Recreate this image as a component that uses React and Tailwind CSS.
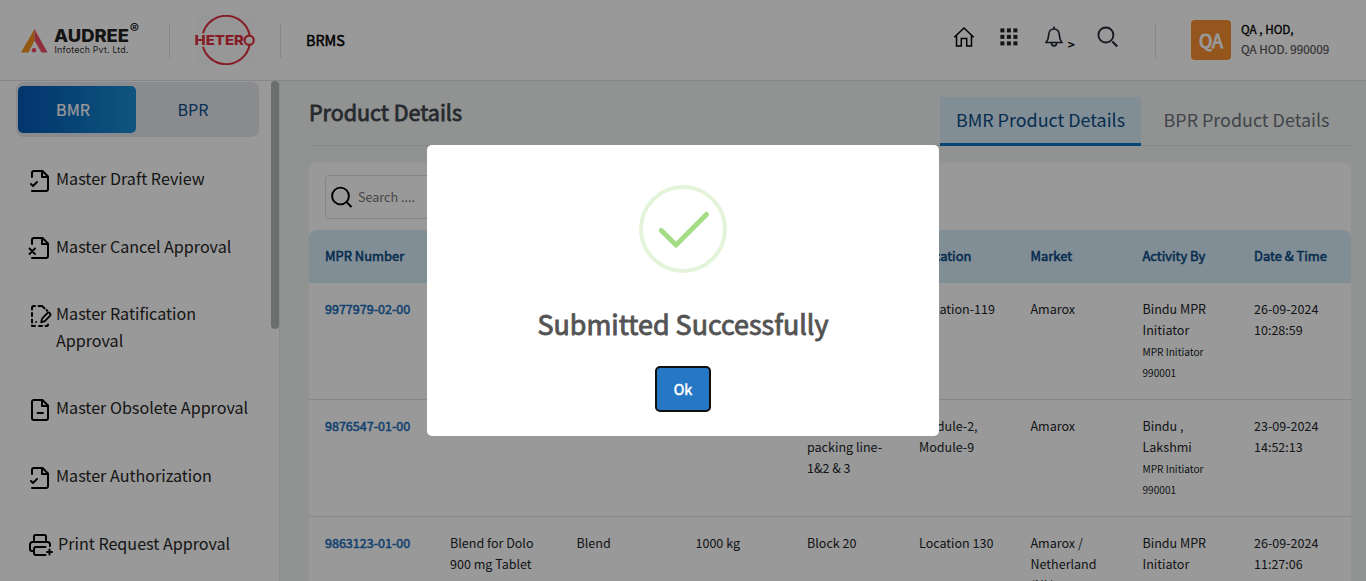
import React from 'react';

const stroke = {
  fill: 'none',
  stroke: 'currentColor',
  strokeWidth: 2,
  strokeLinecap: 'round',
  strokeLinejoin: 'round',
};

function FileIcon({ kind }) {
  return (
    <svg width="24" height="24" viewBox="0 0 24 24" className="block shrink-0 overflow-visible text-black" {...stroke}>
      {(kind === 'check' || kind === 'cross') && (
        <>
          <path d="M4 22h14a2 2 0 0 0 2-2V7.500L14.500 2H6a2 2 0 0 0-2 2v4" />
          <path d="M14 2v6h6" />
        </>
      )}
      {kind === 'check' && <path d="m3 15 2 2 4-4" />}
      {kind === 'cross' && <path d="m1.500 12.500 5.500 5.500M7 12.500 1.500 18" strokeWidth="1.800" />}
      {kind === 'minus' && (
        <>
          <path d="M14.500 2H6a2 2 0 0 0-2 2v16a2 2 0 0 0 2 2h12a2 2 0 0 0 2-2V7.500L14.500 2z" />
          <path d="M14 2v6h6M9.500 15h5.500" />
        </>
      )}
      {kind === 'pen' && (
        <>
          <path d="M4 5.500V4a2 2 0 0 1 2-2h1M10.500 2h3.500l2.500 2.300M18.500 6l.7.7M4 9v3M4 15.500v3M4 21.500v.5h3M11 22h3M17.500 22h1a1.500 1.500 0 0 0 1.500-1.500" />
          <path d="M8 18h.1M13.200 18.300l.9-3.700 5-5.300a1.900 1.900 0 0 1 2.800 2.600l-5 5.300-3.700 1.100z" strokeWidth="1.800" />
        </>
      )}
      {kind === 'printer' && (
        <>
          <path d="M6 8V3.500A1.500 1.500 0 0 1 7.500 2h9A1.500 1.500 0 0 1 18 3.500V8" />
          <path d="M6 18H4a2 2 0 0 1-2-2v-4.500A2.500 2.500 0 0 1 4.500 9h15a2.500 2.500 0 0 1 2.500 2.500V13" />
          <path d="M17.500 14H8a2 2 0 0 0-2 2v4a2 2 0 0 0 2 2h9.500M21.500 16.500v5M19 19h5" />
        </>
      )}
    </svg>
  );
}

const menu = [
  { label: 'Master Draft Review', icon: 'check' },
  { label: 'Master Cancel Approval', icon: 'cross' },
  { label: 'Master Ratification Approval', icon: 'pen' },
  { label: 'Master Obsolete Approval', icon: 'minus' },
  { label: 'Master Authorization', icon: 'check' },
  { label: 'Print Request Approval', icon: 'printer' },
];

const columns = ['MPR Number', 'Product Name', 'Stage', 'Batch Size', 'Block', 'Location', 'Market', 'Activity By', 'Date & Time'];

const rows = [
  ['9977979-02-00', '', '', '', '', 'Location-119', 'Amarox', 'Bindu MPR Initiator', '26-09-2024 10:28:59'],
  ['9876547-01-00', '', '', '', 'Block\npacking line-\n1&2 & 3', 'Module-2, Module-9', 'Amarox', 'Bindu ,\nLakshmi', '23-09-2024 14:52:13'],
  ['9863123-01-00', 'Blend for Dolo 900 mg Tablet', 'Blend', '1000 kg', 'Block 20', 'Location 130', 'Amarox /\nNetherland\n(NL)', 'Bindu MPR Initiator', '26-09-2024 11:27:06'],
];

const grid = 'grid grid-cols-[125px_126.5px_119px_111.500px_112px_111.500px_112px_111.500px_113px]';

function Header() {
  return (
    <header className="flex h-[81px] shrink-0 items-center border-b border-[#dfe1ec] bg-white">
      <svg width="120" height="34" viewBox="0 0 120 34" className="ml-5 shrink-0">
        <path d="M1 29.500 14.500 6 14.500 17.500 8.500 29.500z" fill="#f7931e" />
        <path d="M14.500 6 27.500 29.500H21.500L14.500 17.500z" fill="#ee4d64" />
        <circle cx="14" cy="27.200" r="2.300" fill="#ee4d64" />
        <text x="34" y="19" textLength="75" lengthAdjust="spacingAndGlyphs" fontFamily="Inter" fontWeight="800" fontSize="17" fill="#222">AUDREE</text>
        <text x="34.500" y="29.500" textLength="74" fontFamily="Inter" fontSize="8.800" fill="#333">Infotech Pvt. Ltd.</text>
        <text x="109.800" y="11.200" fontFamily="Inter" fontWeight="600" fontSize="14" fill="#222">®</text>
      </svg>
      <div className="ml-[29px] h-[35px] w-px bg-[#dfe1e6]" />
      <svg width="60" height="50" viewBox="0 0 60 50" className="ml-[25px] shrink-0 bg-[#fcfcfc]">
        <path d="M8 18.200A24 24 0 0 1 54.600 20M54.600 30A24 24 0 0 1 8 31.800" fill="none" stroke="#e0303e" strokeWidth="2" />
        <text x="-0.500" y="30.300" textLength="49.500" lengthAdjust="spacingAndGlyphs" fontFamily="Inter" fontWeight="800" fontSize="13.500" fill="#e0303e">HETER</text>
        <circle cx="54.200" cy="25.300" r="4.600" fill="none" stroke="#e0303e" strokeWidth="2.200" />
      </svg>
      <div className="ml-[25px] h-[35px] w-px bg-[#dfe1e6]" />
      <div className="ml-[25px] text-[14.400px] leading-6 text-black [-webkit-text-stroke:0.500px]">BRMS</div>

      <div className="ml-auto flex items-center">
        <svg width="22" height="22" viewBox="0 0 22 22" className="-mt-[7px] text-black" fill="none" stroke="currentColor" strokeWidth="1.500">
          <path d="M1.300 11.300 11 2l9.700 9.300M3.500 9.800V20h4.800v-7.500h5.400V20h4.800V9.800" />
        </svg>
        <svg width="18" height="18" viewBox="0 0 18 18" className="-mt-[7px] ml-[25px]" fill="#222">
          {[0, 6.5, 13].map((y) => [0, 6.5, 13].map((x) => <rect key={`${x}-${y}`} x={x + 0.4} y={y + 0.4} width="4" height="4" />))}
        </svg>
        <svg width="18" height="22" viewBox="0 0 18 22" className="-mt-[6px] ml-[27px] text-[#1f2933]" fill="none" stroke="currentColor" strokeWidth="1.700">
          <path d="M9 3C5.500 3 3.700 5.700 3.700 8.800c0 4.200-1 5.700-2.600 7.700h15.800c-1.600-2-2.600-3.500-2.600-7.700C14.300 5.700 12.500 3 9 3zM9 3V.5M6.500 17.300a2.500 2.500 0 0 0 5 0" />
        </svg>
        <span className="ml-[5px] mt-[8px] w-[8px] text-[12px] leading-4 text-black [-webkit-text-stroke:0.400px]">&gt;</span>
        <svg width="22" height="22" viewBox="0 0 22 22" className="-mt-[7px] ml-[21px] text-[#252b35]" fill="none" stroke="currentColor">
          <circle cx="8.900" cy="9" r="7.500" strokeWidth="1.900" />
          <path d="m15.300 15.500 5 5" strokeWidth="2.200" />
        </svg>
        <div className="ml-[36px] h-[35px] w-px bg-[#dfe1e6]" />
        <div className="ml-[35px] flex size-10 items-center justify-center rounded bg-[#f98f31] text-[18px] leading-6 text-white [-webkit-text-stroke:0.900px]">QA</div>
        <div className="-mt-[3px] ml-[10px] w-[125px] whitespace-nowrap text-[11.700px] leading-5">
          <div className="text-black [-webkit-text-stroke:0.300px]">QA , HOD,</div>
          <div className="text-[#555] [-webkit-text-stroke:0.200px]">QA HOD. 990009</div>
        </div>
      </div>
    </header>
  );
}

function Sidebar() {
  return (
    <aside className="flex w-[280px] shrink-0 justify-between overflow-hidden border-r border-[#e4e6e8] bg-white">
      <div className="ml-4 w-[243px]">
        <div className="mt-px flex h-[55px] rounded-lg bg-[#e5e8ef] px-[2px] py-1 text-[16.100px]">
          <div className="flex w-[118px] items-center justify-center rounded-[5px] bg-linear-to-r from-[#0559b5] to-[#1a8dd4] pr-2 text-white [-webkit-text-stroke:0.200px]">BMR</div>
          <div className="flex w-[114px] items-center justify-center text-[#0b4f8c]">BPR</div>
        </div>
        <nav className="mt-[28px] flex flex-col gap-[40.750px]">
          {menu.map((m) => (
            <div key={m.label} className="flex items-start pl-3 text-[16.130px] leading-[26.800px] text-[#262626]">
              <div className="-mb-1 mt-[3.800px]"><FileIcon kind={m.icon} /></div>
              <span className={m.icon === 'printer' ? 'ml-[6px]' : 'ml-[4px] max-w-[200px]'}>{m.label}</span>
            </div>
          ))}
        </nav>
      </div>
      <div className="h-[248px] w-2 rounded-full bg-[#b4b7b7]" />
    </aside>
  );
}

function Table() {
  return (
    <div className="mt-[17px] w-[1042px] rounded-lg bg-white">
      <div className="px-4 pt-3">
        <div className="flex h-11 w-[280px] items-center rounded border border-[#dcdcdc] pl-[5px]">
          <svg width="22" height="22" viewBox="0 0 22 22" className="text-black" fill="none" stroke="currentColor" strokeWidth="1.900">
            <circle cx="9.500" cy="10" r="8.400" />
            <path d="m15.500 16 5 5" />
          </svg>
          <span className="ml-[5px] text-[12.600px] leading-5 text-[#757575]">Search ....</span>
        </div>
      </div>
      <div className={`${grid} mt-[11px] h-[53px] items-center rounded-t-lg bg-[#d7edf9] pb-[2px] text-[12.950px] leading-[19px] text-[#0b4b84] [-webkit-text-stroke:0.550px]`}>
        {columns.map((c) => <div key={c} className="whitespace-nowrap px-4">{c}</div>)}
      </div>
      {rows.map((r) => (
        <div key={r[0]} className={`${grid} h-[117px] border-b border-[#dee2e6] pt-[15px] text-[12.540px] leading-[21px] text-[#212529]`}>
          {r.map((c, i) => (
            <div key={i} className={i === 0 ? 'whitespace-nowrap px-4 text-[#1f70bb] [-webkit-text-stroke:0.550px]' : 'whitespace-pre-line pl-4 pr-3'}>
              {c}
              {i === 7 && <div className="mt-px text-[10.100px]">MPR Initiator<br />990001</div>}
            </div>
          ))}
        </div>
      ))}
    </div>
  );
}

function SuccessDialog() {
  return (
    <div className="fixed inset-0 flex items-center justify-center bg-black/40">
      <div className="flex h-[291px] w-[512px] flex-col items-center rounded-[5px] bg-white pt-10">
        <svg width="88" height="88" viewBox="0 0 88 88" fill="none">
          <circle cx="44" cy="44" r="42" stroke="#e4f4db" strokeWidth="4" />
          <path d="M22.300 45.500 37 60 67.500 29.500" stroke="#a5dc86" strokeWidth="5" strokeLinecap="round" strokeLinejoin="round" />
        </svg>
        <h2 className="mt-[31px] text-[26.900px] leading-10 text-[#545454] [-webkit-text-stroke:0.900px]">Submitted Successfully</h2>
        <button className="mt-[22px] h-[46px] w-14 rounded-[5px] border-2 border-[#101010] bg-[#2778c4] text-[14.300px] leading-5 text-white [-webkit-text-stroke:0.500px]">Ok</button>
      </div>
    </div>
  );
}

export default function App() {
  return (
    <div className="flex h-[581px] w-[1366px] flex-col overflow-hidden bg-[#f1f6f3] font-['Noto_Sans_CJK_SC',sans-serif]">
      <Header />
      <div className="flex min-h-0 flex-1">
        <Sidebar />
        <main className="ml-[29px] flex-1 overflow-hidden">
          <div className="flex h-[65px] w-[1042px] justify-between border-b border-[#e0e4e3]">
            <h1 className="mt-[15px] text-[21.500px] leading-8 text-[#41464f] [-webkit-text-stroke:0.800px]">Product Details</h1>
            <div className="mt-4 flex text-[17.920px]">
              <div className="flex h-[49px] w-[201px] items-center justify-center border-b-[3px] border-[#0c73c2] bg-[#d7edf9] pb-[2px] text-[#0b4b84]">BMR Product Details</div>
              <div className="flex h-[49px] w-[210px] items-center justify-center border-b-[3px] border-transparent pb-[2px] pl-px text-[#6c727c]">BPR Product Details</div>
            </div>
          </div>
          <Table />
        </main>
      </div>
      <SuccessDialog />
    </div>
  );
}
